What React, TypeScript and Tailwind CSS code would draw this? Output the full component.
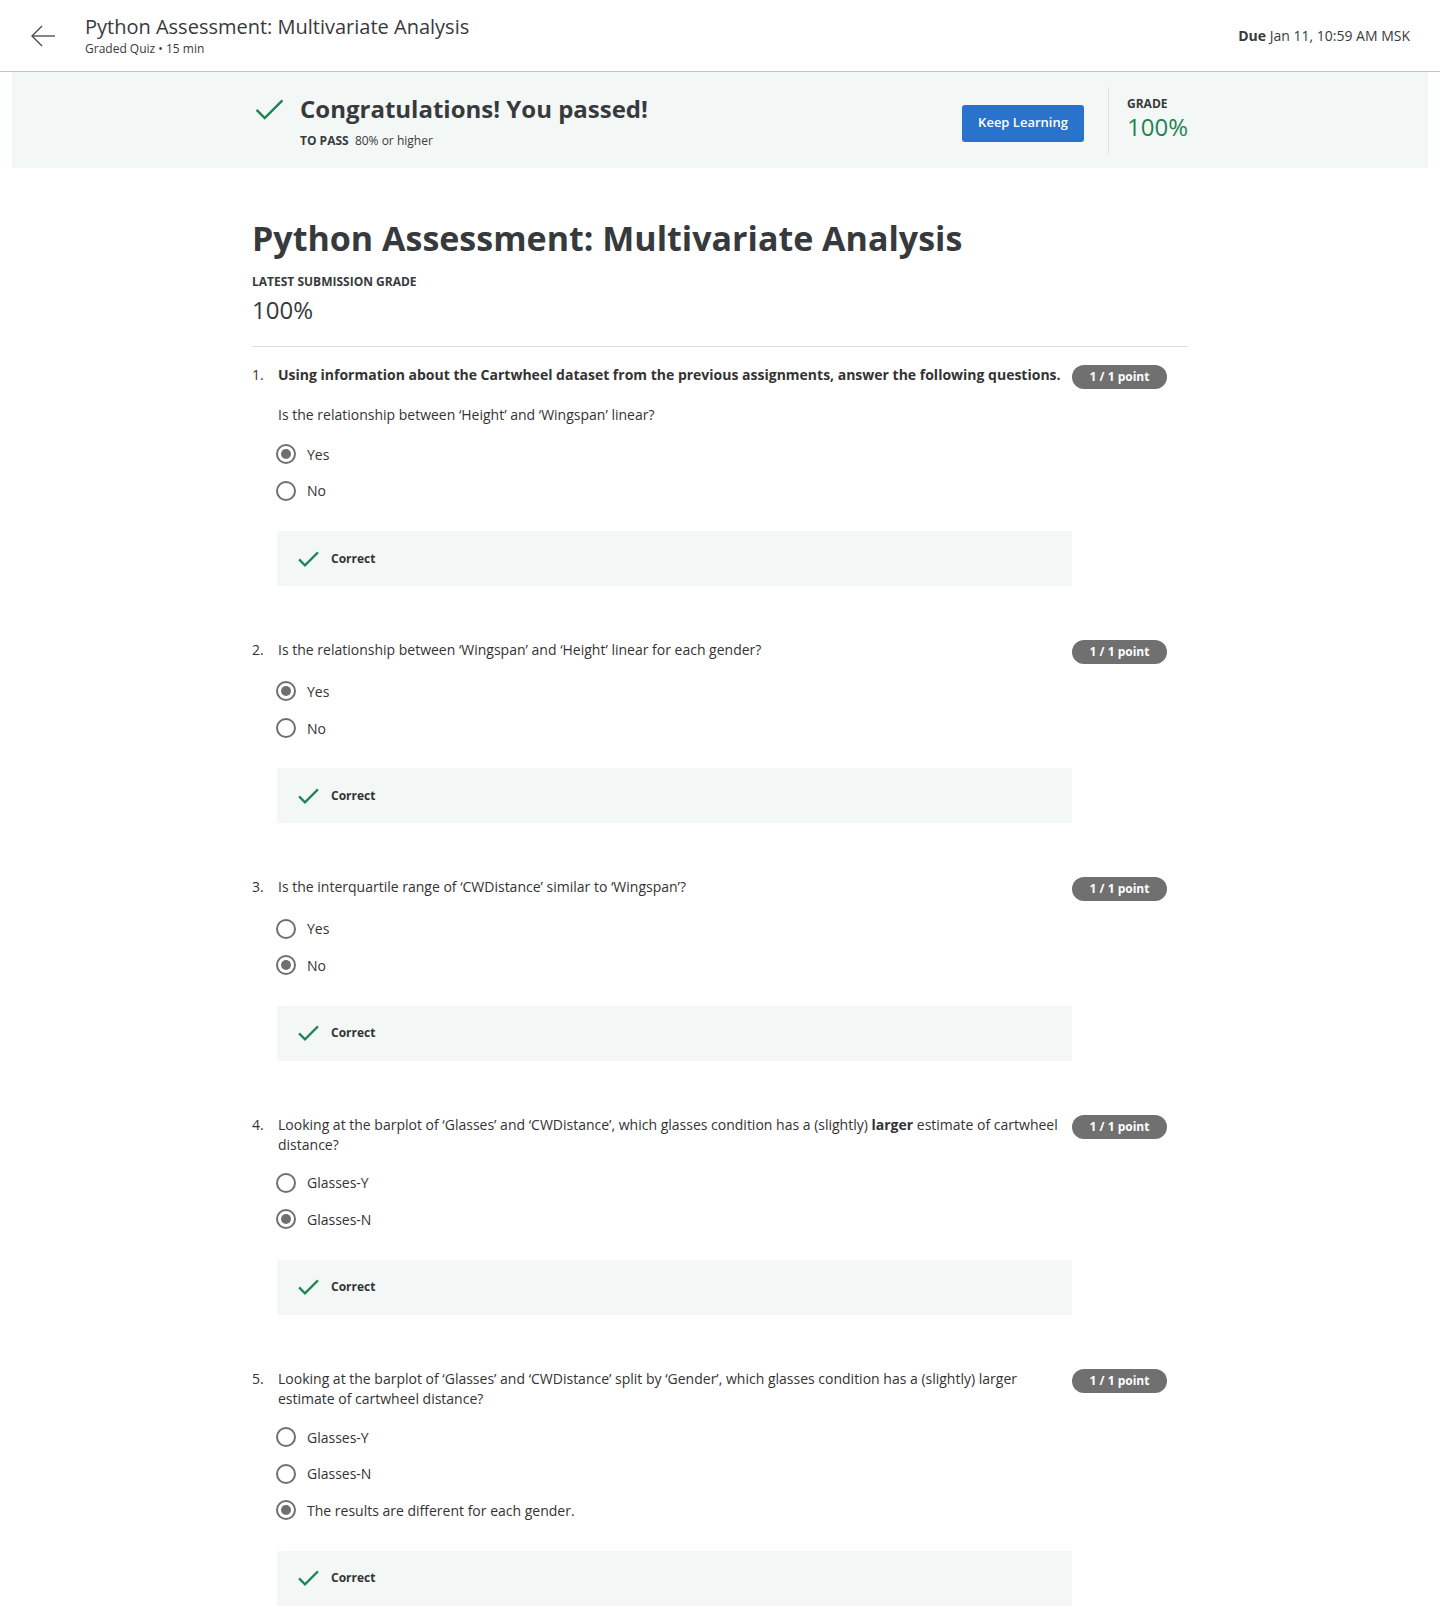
import React from "react";

interface Question {
  num: number;
  text: React.ReactNode;
  sub?: string;
  bold?: boolean;
  options: string[];
  selected: number;
  optGap: string;
}

const questions: Question[] = [
  {
    num: 1,
    text: "Using information about the Cartwheel dataset from the previous assignments, answer the following questions.",
    bold: true,
    sub: "Is the relationship between \u2018Height\u2019 and \u2018Wingspan\u2019 linear?",
    options: ["Yes", "No"],
    selected: 0,
    optGap: "mt-[11px]",
  },
  {
    num: 2,
    text: "Is the relationship between \u2018Wingspan\u2019 and \u2018Height\u2019 linear for each gender?",
    options: ["Yes", "No"],
    selected: 0,
    optGap: "mt-[13px]",
  },
  {
    num: 3,
    text: "Is the interquartile range of \u2018CWDistance\u2019 similar to \u2018Wingspan\u2019?",
    options: ["Yes", "No"],
    selected: 1,
    optGap: "mt-[13px]",
  },
  {
    num: 4,
    text: (
      <>
        Looking at the barplot of {"\u2018"}Glasses{"\u2019"} and {"\u2018"}CWDistance{"\u2019"}, which glasses condition has a (slightly){" "}
        <b className="font-bold">larger</b> estimate of cartwheel distance?
      </>
    ),
    options: ["Glasses-Y", "Glasses-N"],
    selected: 1,
    optGap: "mt-[10px]",
  },
  {
    num: 5,
    text: "Looking at the barplot of \u2018Glasses\u2019 and \u2018CWDistance\u2019 split by \u2018Gender\u2019, which glasses condition has a (slightly) larger estimate of cartwheel distance?",
    options: ["Glasses-Y", "Glasses-N", "The results are different for each gender."],
    selected: 2,
    optGap: "mt-[10px]",
  },
];

function Check({ className, width = 2.6 }: { className?: string; width?: number }) {
  return (
    <svg viewBox="0 0 30 22" className={className} fill="none">
      <path d="M1.5 11.5 L10 20 L28.5 1.5" stroke="#1f8354" strokeWidth={width} />
    </svg>
  );
}

function Radio({ checked }: { checked: boolean }) {
  return (
    <span className="w-[20px] h-[20px] rounded-full border-2 border-[#6f6f6f] flex items-center justify-center shrink-0">
      {checked && <span className="w-[10px] h-[10px] rounded-full bg-[#6f6f6f]" />}
    </span>
  );
}

function QuestionBlock({ q, first }: { q: Question; first: boolean }) {
  return (
    <div className={`flex pr-[21px] ${first ? "mt-[18px]" : "mt-[54px]"}`}>
      <div className="w-[26px] shrink-0 text-[14px] leading-[20px] text-[#333]">{q.num}.</div>
      <div className="w-[794px] shrink-0">
        <p className={`text-[14px] leading-[20px] text-[#333] ${q.bold ? "font-bold" : ""}`}>{q.text}</p>
        {q.sub && <p className="mt-[20px] text-[14px] leading-[20px] text-[#333]">{q.sub}</p>}
        <div className={`${q.optGap} flex flex-col`}>
          {q.options.map((opt, i) => (
            <label key={opt} className="h-[36.6px] flex items-center gap-[11px] -ml-[2px]">
              <Radio checked={i === q.selected} />
              <span className="text-[14px] text-[#333]">{opt}</span>
            </label>
          ))}
        </div>
        <div className="mt-[22px] h-[55px] bg-[#f3f8f6] flex items-center pl-[21px] -ml-px">
          <Check className="w-[21px] h-[16px]" width={3.2} />
          <span className="ml-[12px] text-[12px] font-bold text-[#333]">Correct</span>
        </div>
      </div>
      <div className="w-[95px] shrink-0">
        <span className="h-[24px] rounded-full bg-[#707070] text-white text-[12px] font-bold flex items-center justify-center">
          1 / 1 point
        </span>
      </div>
    </div>
  );
}

export default function App() {
  return (
    <div className="min-h-[1619px] bg-white font-['Open_Sans',sans-serif] text-[#333]">
      <header className="h-[72px] border-b border-[#c4c4c4] flex items-center pl-[30px] pr-[30px]">
        <svg viewBox="0 0 26 22" className="w-[26px] h-[22px] text-[#444]" fill="none" stroke="currentColor" strokeWidth="1.3">
          <path d="M25 11 H2" />
          <path d="M12 1 L2 11 L12 21" />
        </svg>
        <div className="ml-[29px] flex flex-col -mt-[2px]">
          <h1 className="text-[20px] leading-[28px] text-[#373a3c]">Python Assessment: Multivariate Analysis</h1>
          <span className="text-[12px] leading-[16px] text-[#373a3c]">Graded Quiz &bull; 15 min</span>
        </div>
        <div className="ml-auto text-[14px] text-[#373a3c]">
          <span className="font-bold">Due</span> Jan 11, 10:59 AM MSK
        </div>
      </header>

      <section className="mx-3 h-[96px] bg-[#f3f8f6] flex items-center">
        <div className="w-[936px] mx-auto flex items-center">
          <div className="flex items-start">
            <Check className="ml-[3px] mt-[8px] w-[29px] h-[21px]" />
            <div className="ml-[16px] mt-[2px]">
              <h2 className="text-[24px] leading-[32px] font-bold text-[#373a3c]">Congratulations! You passed!</h2>
              <p className="mt-[8px] text-[12px] leading-[16px] text-[#373a3c]">
                <span className="font-bold">TO PASS</span>&nbsp; 80% or higher
              </p>
            </div>
          </div>
          <button className="ml-auto mt-[6px] w-[122px] h-[37px] rounded-[3px] bg-[#2a73cc] text-white text-[13px] font-semibold">
            Keep Learning
          </button>
          <div className="ml-[24px] mr-[18px] w-px h-[67px] bg-[#dfe3e2]" />
          <div className="w-[61px] flex flex-col -mt-[2px]">
            <span className="text-[12px] leading-[16px] font-bold text-[#373a3c]">GRADE</span>
            <span className="text-[24px] leading-[30px] font-normal text-[#1f8354]">100%</span>
          </div>
        </div>
      </section>

      <main className="w-[936px] mx-auto pt-[47px] pb-[12px]">
        <h1 className="text-[34px] leading-[46px] font-bold text-[#373a3c]">Python Assessment: Multivariate Analysis</h1>
        <p className="mt-[13px] text-[12px] leading-[16px] font-bold text-[#373a3c]">LATEST SUBMISSION GRADE</p>
        <p className="mt-[4px] text-[24px] leading-[32px] font-normal text-[#373a3c]">100%</p>
        <div className="mt-[20px] h-px bg-[#dcdcdc]" />
        {questions.map((q, i) => (
          <QuestionBlock key={q.num} q={q} first={i === 0} />
        ))}
      </main>
    </div>
  );
}
